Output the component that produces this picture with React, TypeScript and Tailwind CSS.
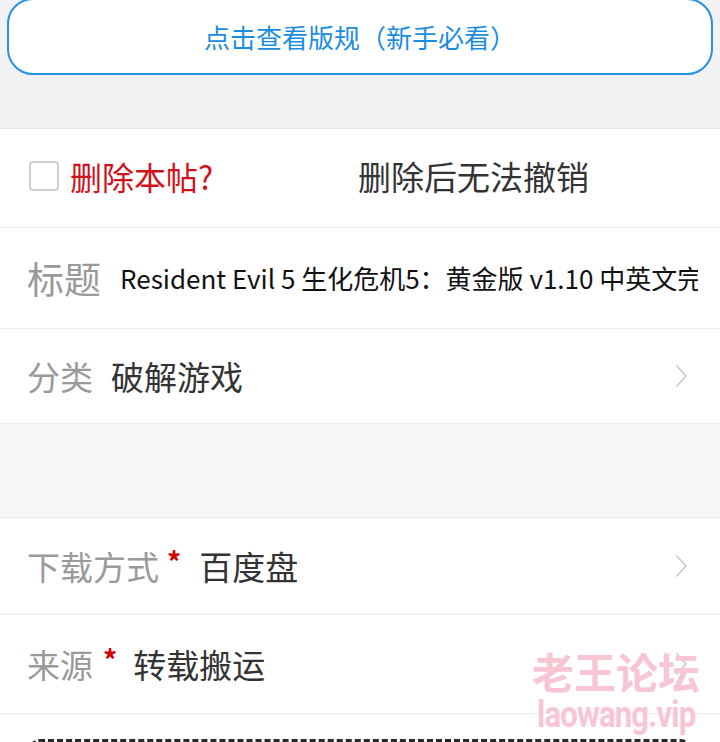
import React from "react";

const cjk = "font-['Noto_Sans_CJK_SC',_'Noto_Sans',_sans-serif]";

function Chevron() {
  return (
    <svg width="13" height="24" viewBox="0 0 13 24" className="shrink-0">
      <polyline points="1.5,1.5 11,12 1.5,22.5" fill="none" stroke="#c4c4c4" strokeWidth="1.4" />
    </svg>
  );
}

function Star() {
  return <span className="mt-[-2px] self-start text-[28px] font-bold leading-none text-[#d40000]">*</span>;
}

export default function App() {
  return (
    <div className={`relative min-h-screen overflow-hidden bg-[#f2f2f4] ${cjk}`}>
      {/* rules button */}
      <div className="-mt-[2px] px-[7px] pb-[53px]">
        <div className="flex h-[77px] items-center justify-center rounded-[26px] border-2 border-[#2690e2] bg-white text-[26px] text-[#1a8de0]">
          点击查看版规（新手必看）
        </div>
      </div>

      <div className="border-t border-[#e8e8ea] bg-white leading-none">
        <div className="flex h-[99px] items-center border-b border-[#ebebed] pb-[4px] pl-[29px]">
          <span className="h-[30px] w-[30px] shrink-0 rounded-[4px] border-2 border-[#cfcfcf] bg-white" />
          <span className="ml-[11px] w-[288px] text-[32px] text-[#d0121b]">删除本帖?</span>
          <span className="text-[33px] text-[#333]">删除后无法撤销</span>
        </div>

        <div className="flex h-[101px] items-center whitespace-nowrap border-b border-[#ebebed] pl-[27px] pr-[22px]">
          <span className="shrink-0 text-[37px] text-[#9a9a9a]">标题</span>
          <span className="ml-[19px] min-w-0 flex-1 overflow-hidden text-[26px] text-[#111]">
            Resident Evil 5 生化危机5：黄金版 v1.10 中英文完整版
          </span>
        </div>

        <div className="flex h-[94px] items-center pl-[27px] pr-[32px]">
          <span className="text-[33px] text-[#9a9a9a]">分类</span>
          <span className="ml-[18px] flex-1 text-[33px] text-[#333]">破解游戏</span>
          <Chevron />
        </div>
      </div>

      <div className="h-[95px] border-y border-[#ebebed] bg-[#f7f7f8]" />

      <div className="bg-white pb-[26px] leading-none">
        <div className="flex h-[97px] items-center border-b border-[#ebebed] pl-[27px] pr-[32px]">
          <span className="text-[33px] text-[#9a9a9a]">下载方式</span>
          <span className="ml-[8px] flex h-[34px]"><Star /></span>
          <span className="ml-[18px] flex-1 text-[33px] text-[#333]">百度盘</span>
          <Chevron />
        </div>

        <div className="flex h-[99px] items-center border-b border-[#ebebed] pl-[27px] pr-[32px]">
          <span className="text-[33px] text-[#9a9a9a]">来源</span>
          <span className="ml-[10px] flex h-[34px]"><Star /></span>
          <span className="ml-[16px] flex-1 text-[33px] text-[#333]">转载搬运</span>
          <Chevron />
        </div>

        <div className="mx-[31px] mt-[25px] h-[160px] rounded-[8px] border-[3px] border-dashed border-[#2a2a2a]" />
      </div>

      {/* watermark */}
      <div className="pointer-events-none absolute left-[531px] top-[650px] flex w-[170px] flex-col items-center leading-none text-[#f8c6d3]">
        <span className="text-[42px] font-bold">老王论坛</span>
        <span className="mt-[4px] font-['Roboto',_sans-serif] text-[37px] font-bold tracking-[-1px] [transform:scaleX(0.84)]">
          laowang.vip
        </span>
      </div>
    </div>
  );
}
